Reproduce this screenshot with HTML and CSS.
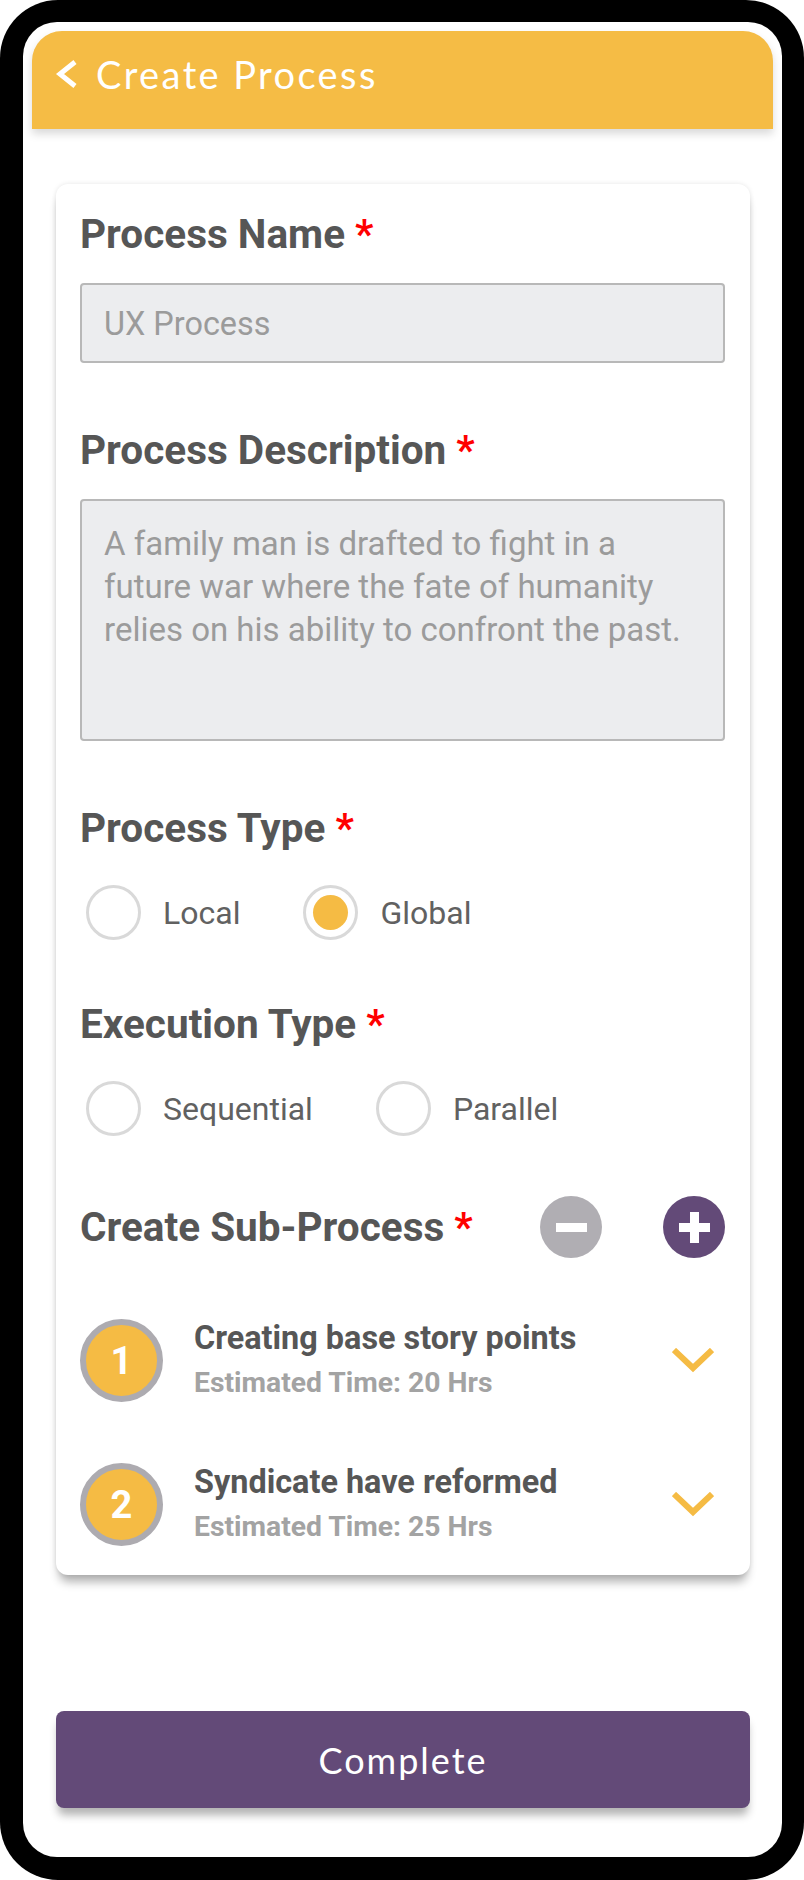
FILE: index.html
```html
<!DOCTYPE html>
<html lang="en">
<head>
  <meta charset="UTF-8" />
  <meta name="viewport" content="width=device-width, initial-scale=1.0" />
  <title>Create Process</title>
  <link rel="stylesheet" href="styles.css">
</head>
<body>
  <div class="phone">
    <div class="screen">
      <header class="topbar">
        <svg class="back" width="24" height="30" viewBox="0 0 24 30">
          <polyline points="20,3 5,15 20,27" fill="none" stroke="#fff" stroke-width="5" />
        </svg>
        <h1>Create Process</h1>
      </header>

      <main class="card">
        <div class="field">
          <div class="label">Process Name <span class="req">*</span></div>
          <div class="input">UX Process</div>
        </div>

        <div class="field">
          <div class="label">Process Description <span class="req">*</span></div>
          <div class="textarea">
            A family man is drafted to fight in a<br>
            future war where the fate of humanity<br>
            relies on his ability to confront the past.
          </div>
        </div>

        <div class="field choice">
          <div class="label">Process Type <span class="req">*</span></div>
          <div class="radios">
            <div class="option"><span class="radio"></span>Local</div>
            <div class="option"><span class="radio checked"><span class="dot"></span></span>Global</div>
          </div>
        </div>

        <div class="field choice">
          <div class="label">Execution Type <span class="req">*</span></div>
          <div class="radios">
            <div class="option"><span class="radio"></span>Sequential</div>
            <div class="option"><span class="radio"></span>Parallel</div>
          </div>
        </div>

        <div class="field sub-head">
          <div class="label">Create Sub-Process <span class="req">*</span></div>
          <div class="round-btns">
            <span class="round minus"><span class="bar"></span></span>
            <span class="round plus"><span class="bar"></span><span class="bar vert"></span></span>
          </div>
        </div>

        <ul class="subs">
          <li class="sub">
            <span class="num">1</span>
            <div class="sub-text">
              <div class="sub-title">Creating base story points</div>
              <div class="sub-time">Estimated Time: 20 Hrs</div>
            </div>
            <svg class="chev" width="42" height="26" viewBox="0 0 42 26">
              <polyline points="2,2 21,20 40,2" fill="none" stroke="#f5bb44" stroke-width="6" />
            </svg>
          </li>
          <li class="sub">
            <span class="num">2</span>
            <div class="sub-text">
              <div class="sub-title">Syndicate have reformed</div>
              <div class="sub-time">Estimated Time: 25 Hrs</div>
            </div>
            <svg class="chev" width="42" height="26" viewBox="0 0 42 26">
              <polyline points="2,2 21,20 40,2" fill="none" stroke="#f5bb44" stroke-width="6" />
            </svg>
          </li>
        </ul>
      </main>

      <button class="complete">Complete</button>
    </div>
  </div>
</body>
</html>
```

FILE: styles.css
```css
* {
  margin: 0;
  padding: 0;
  box-sizing: border-box;
}
body {
  background: #fff;
  font-family: Roboto, "Liberation Sans", sans-serif;
}
.phone {
  width: 804px;
  height: 1880px;
  background: #000;
  border-radius: 58px;
  padding: 22px 22px 23px 23px;
}
.screen {
  height: 100%;
  background: #fff;
  border-radius: 34px;
  padding: 9px 9px 0;
  display: flex;
  flex-direction: column;
}
.topbar {
  height: 98px;
  background: #f5bc45;
  border-radius: 30px 30px 0 0;
  display: flex;
  align-items: center;
  gap: 17px;
  padding: 0 0 12px 23px;
  box-shadow: 0 5px 8px rgba(0, 0, 0, 0.15);
}
.topbar h1 {
  font-family: Lato, "Open Sans", sans-serif;
  font-weight: 400;
  font-size: 38px;
  letter-spacing: 2.4px;
  color: #fff;
}
.card {
  margin: 55px 23px 0 24px;
  padding: 26px 25px 29px 24px;
  background: #fff;
  border-radius: 12px;
  box-shadow: 0 10px 10px -3px rgba(0, 0, 0, 0.3), 0 0 5px rgba(0, 0, 0, 0.1);
}
.field + .field {
  margin-top: 63px;
}
.field.choice + .field {
  margin-top: 60px;
}
.label {
  font-size: 40.5px;
  line-height: 48px;
  font-weight: 700;
  color: #565656;
  margin-bottom: 25px;
}
.req {
  color: #ff0000;
}
.input {
  height: 80px;
  background: #ecedef;
  border: 2px solid #b8b8b8;
  border-radius: 4px;
  padding: 3px 22px 0;
  font-size: 32.4px;
  line-height: 73px;
  color: #9b9b9b;
}
.textarea {
  height: 242px;
  background: #ecedef;
  border: 2px solid #b8b8b8;
  border-radius: 4px;
  padding: 21px 22px;
  font-size: 33px;
  line-height: 43px;
  color: #9b9b9b;
}
.radios {
  display: flex;
  gap: 63px;
  padding: 8px 0 0 6px;
}
.option {
  display: flex;
  align-items: center;
  gap: 22px;
  font-size: 32px;
  line-height: 38px;
  color: #616161;
}
.radio {
  width: 55px;
  height: 55px;
  border: 3px solid #d9d9d9;
  border-radius: 50%;
  display: flex;
  align-items: center;
  justify-content: center;
}
.radio .dot {
  width: 35px;
  height: 35px;
  border-radius: 50%;
  background: #f5bb44;
}
.sub-head {
  display: flex;
  align-items: center;
}
.sub-head .label {
  margin-bottom: 0;
}
.round-btns {
  margin-left: auto;
  display: flex;
  gap: 61px;
}
.round {
  width: 62px;
  height: 62px;
  border-radius: 50%;
  display: flex;
  align-items: center;
  justify-content: center;
  position: relative;
}
.round.minus {
  background: #b0aeb3;
}
.round.plus {
  background: #634a78;
}
.round .bar {
  width: 31px;
  height: 9px;
  background: #fff;
}
.round .bar.vert {
  position: absolute;
  width: 9px;
  height: 31px;
}
.subs {
  list-style: none;
  margin-top: 61px;
  display: flex;
  flex-direction: column;
  gap: 61px;
}
.sub {
  display: flex;
  align-items: center;
}
.num {
  width: 83px;
  height: 83px;
  flex-shrink: 0;
  border-radius: 50%;
  border: 6px solid #adabb0;
  background: #f5bb44;
  color: #fff;
  font-size: 38px;
  font-weight: 700;
  display: flex;
  align-items: center;
  justify-content: center;
}
.sub-text {
  margin-left: 31px;
}
.sub-title {
  font-size: 32.4px;
  line-height: 38px;
  font-weight: 700;
  color: #565656;
}
.sub-time {
  margin-top: 7px;
  font-size: 28.3px;
  line-height: 38px;
  font-weight: 700;
  color: #a3a3a3;
}
.chev {
  margin-left: auto;
  margin-right: 11px;
}
.complete {
  margin: 136px 23px 0 24px;
  height: 97px;
  border: none;
  border-radius: 8px;
  background: #634a78;
  color: #fff;
  font-family: Lato, "Open Sans", sans-serif;
  font-size: 36px;
  letter-spacing: 2px;
  box-shadow: 0 9px 9px -2px rgba(0, 0, 0, 0.3);
}
```
